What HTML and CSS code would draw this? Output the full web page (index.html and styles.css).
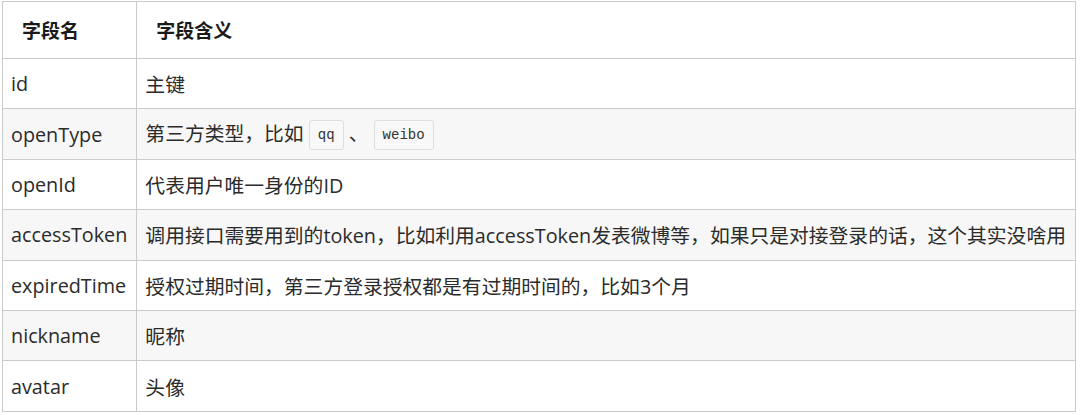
FILE: index.html
```html
<!DOCTYPE html>
<html>
<head>
    <title>字段说明</title>
    <link rel="stylesheet" href="styles.css">
</head>
<body>
    <table class="field-table">
        <thead>
            <tr>
                <th class="col-name">字段名</th>
                <th>字段含义</th>
            </tr>
        </thead>
        <tbody>
            <tr>
                <td>id</td>
                <td>主键</td>
            </tr>
            <tr>
                <td>openType</td>
                <td>第三方类型，比如 <code>qq</code> 、 <code>weibo</code></td>
            </tr>
            <tr>
                <td>openId</td>
                <td>代表用户唯一身份的ID</td>
            </tr>
            <tr>
                <td>accessToken</td>
                <td>调用接口需要用到的token，比如利用accessToken发表微博等，如果只是对接登录的话，这个其实没啥用</td>
            </tr>
            <tr>
                <td>expiredTime</td>
                <td>授权过期时间，第三方登录授权都是有过期时间的，比如3个月</td>
            </tr>
            <tr>
                <td>nickname</td>
                <td>昵称</td>
            </tr>
            <tr>
                <td>avatar</td>
                <td>头像</td>
            </tr>
        </tbody>
    </table>
</body>
</html>
```

FILE: styles.css
```css
body {
    margin: 0;
    padding: 1px 0 0 2px;
    background-color: #fff;
    font-family: "Open Sans", "Noto Sans CJK SC", sans-serif;
    color: #2b2b2b;
}

.field-table {
    border-collapse: collapse;
    width: 1072px;
    font-size: 19.8px;
}

.field-table th,
.field-table td {
    border: 1px solid #cbcbcb;
    text-align: left;
    vertical-align: middle;
    white-space: nowrap;
}

.field-table th {
    height: 56px;
    padding: 0 19px;
    font-size: 19px;
    font-weight: bold;
    color: #1a1a1a;
}

.field-table td {
    height: 49.4px;
    padding: 0 9px 0 8px;
}

.col-name {
    width: 1px;
}

.field-table tbody tr:nth-child(even) {
    background-color: #f7f7f7;
}

code {
    display: inline-block;
    font-family: "Liberation Mono", monospace;
    font-size: 14px;
    line-height: 28px;
    padding: 0 8px;
    border: 1px solid #dedede;
    border-radius: 3px;
    background-color: #f8f8f8;
    color: #333;
    vertical-align: middle;
}
```
